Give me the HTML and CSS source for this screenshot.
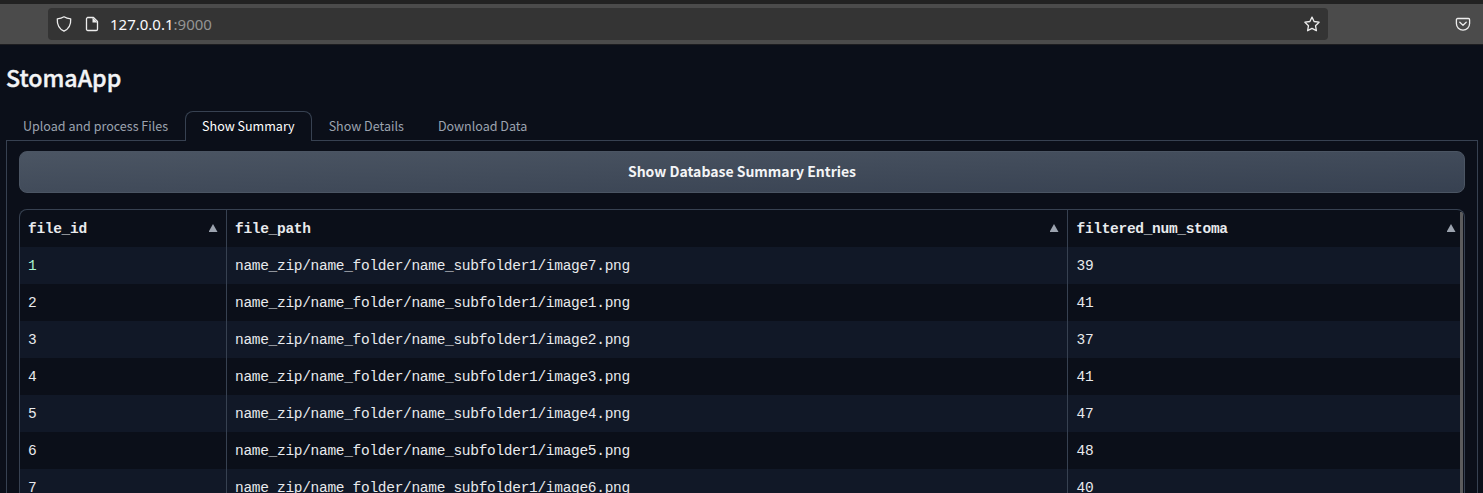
FILE: index.html
```html
<!DOCTYPE html>
<html lang="en">
<head>
<meta charset="utf-8">
<title>StomaApp</title>
<link rel="stylesheet" href="styles.css">
</head>
<body>
<header class="toolbar">
  <div class="address">
    <svg class="icon" viewBox="0 0 16 16"><path d="M8 .8C6 2 3.700 2.600 1.300 2.900c-.3 5 1.200 9.700 6.700 12.300 5.500-2.600 7-7.300 6.700-12.300C12.300 2.600 10 2 8 .8z"/></svg>
    <svg class="icon page" viewBox="0 0 16 16"><path d="M3.500 1.500H9.500L13.500 5.500V13.200a1.300 1.300 0 0 1-1.300 1.300H3.800A1.300 1.300 0 0 1 2.500 13.200V2.800A1.300 1.300 0 0 1 3.800 1.500z"/><path class="solid" d="M8.500 1.500V6.500H13.500z"/></svg>
    <span class="url">127.0.0.1<span class="port">:9000</span></span>
    <svg class="icon star" viewBox="0 0 16 16"><path d="M8 1.100L10.100 5.500 15.100 6.200 11.500 9.700 12.400 14.700 8 12.400 3.600 14.700 4.500 9.700 .9 6.200 5.900 5.500z"/></svg>
  </div>
  <svg class="icon pocket" viewBox="0 0 16 16"><path d="M2.600 2.500H13.400a1.200 1.200 0 0 1 1.200 1.200V7.500a6.600 6.600 0 0 1-13.200 0V3.700A1.200 1.200 0 0 1 2.600 2.500z"/><path d="M4.800 6.300L8 9.200 11.200 6.300"/></svg>
</header>
<main class="app">
  <h1 class="title">StomaApp</h1>
  <nav class="tabs">
    <button class="tab">Upload and process Files</button>
    <button class="tab selected">Show Summary</button>
    <button class="tab">Show Details</button>
    <button class="tab">Download Data</button>
    <div class="rule"></div>
  </nav>
  <section class="panel">
    <button class="action">Show Database Summary Entries</button>
    <div class="frame">
      <div class="table">
        <div class="row head">
          <div class="cell"><span>file_id</span><i class="sort"></i></div>
          <div class="cell"><span>file_path</span><i class="sort"></i></div>
          <div class="cell"><span>filtered_num_stoma</span><i class="sort"></i></div>
        </div>
        <div class="row"><div class="cell active">1</div><div class="cell">name_zip/name_folder/name_subfolder1/image7.png</div><div class="cell">39</div></div>
        <div class="row"><div class="cell">2</div><div class="cell">name_zip/name_folder/name_subfolder1/image1.png</div><div class="cell">41</div></div>
        <div class="row"><div class="cell">3</div><div class="cell">name_zip/name_folder/name_subfolder1/image2.png</div><div class="cell">37</div></div>
        <div class="row"><div class="cell">4</div><div class="cell">name_zip/name_folder/name_subfolder1/image3.png</div><div class="cell">41</div></div>
        <div class="row"><div class="cell">5</div><div class="cell">name_zip/name_folder/name_subfolder1/image4.png</div><div class="cell">47</div></div>
        <div class="row"><div class="cell">6</div><div class="cell">name_zip/name_folder/name_subfolder1/image5.png</div><div class="cell">48</div></div>
        <div class="row"><div class="cell">7</div><div class="cell">name_zip/name_folder/name_subfolder1/image6.png</div><div class="cell">40</div></div>
      </div>
      <div class="scrollbar"></div>
    </div>
  </section>
</main>
</body>
</html>
```
FILE: styles.css
```css
* { box-sizing: border-box; }
html, body { height: 100%; }
body { margin: 0; overflow: hidden; display: flex; flex-direction: column; background: #0b0f19; color: #f3f4f6; font-family: "Noto Sans CJK SC", "Noto Sans", sans-serif; }
button { font: inherit; margin: 0; color: inherit; }

.toolbar { flex: none; height: 45px; display: flex; align-items: center; justify-content: space-between; padding: 0 12px 0 48px; background: #4b4b4b; border-top: 4px solid #222; border-bottom: 1px solid #1d1d20; }
.address { width: 1280px; height: 32px; display: flex; align-items: center; padding: 0 8px; background: #343434; border-radius: 4px; }
.icon { width: 16px; height: 16px; flex: none; fill: none; stroke: #ededed; stroke-width: 1.300; stroke-linejoin: round; stroke-linecap: round; }
.icon .solid { fill: #ededed; stroke: none; }
.page { margin-left: 12px; }
.star { margin-left: auto; }
.url { margin-left: 10px; font: 15px/20px "Noto Sans", sans-serif; color: #fbfbfe; }
.port { color: #949494; }

.app { flex: 1; min-height: 0; display: flex; flex-direction: column; padding: 0 5px 0 6px; }
.title { width: max-content; margin: 15px 0 0; height: 36px; font-size: 23.200px; line-height: 35px; font-weight: 500; -webkit-text-stroke: .4px #f3f4f6; }
.tabs { flex: none; display: flex; height: 30px; margin-top: 15px; }
.tab { height: 30px; padding: 1px 17px 0; border: 0; border-bottom: 1px solid #374151; background: none; color: #9ca3af; font-size: 12.540px; line-height: 28px; white-space: nowrap; }
.selected { padding: 0 16px 1px; border: 1px solid #374151; border-bottom: 0; border-radius: 8px 8px 0 0; color: #fff; }
.rule { flex: 1; border-bottom: 1px solid #374151; }

.panel { flex: 1; min-height: 0; display: flex; flex-direction: column; gap: 16px; padding: 10px 12px 0; border: solid #374151; border-width: 0 1px; }
.action { flex: none; height: 42px; border: 1px solid #4b5563; border-radius: 8px; background: linear-gradient(to bottom right, #4b5563, #374151); font-size: 14px; line-height: 38px; font-weight: 700; padding: 0 0 2px; }
.frame { flex: 1; min-height: 0; display: flex; overflow: hidden; border: 1px solid #374151; border-bottom: 0; border-radius: 8px 8px 0 0; }
.table { flex: 1; }
.row { display: grid; grid-template-columns: 207px 841px 1fr; height: 37px; }
.row:nth-child(even) { background: #111827; }
.cell { display: flex; align-items: center; justify-content: space-between; padding: 1px 9px 0 8px; border-right: 1px solid #374151; font: 14.500px/22px "Liberation Mono", monospace; letter-spacing: -.3px; color: #e8eaed; }
.cell:last-child { border-right: 0; padding-left: 8.500px; padding-right: 5px; }
.head .cell { font-weight: 700; }
.cell.active { color: #a7f3d0; }
.sort { width: 9px; height: 8px; margin: -2px -.5px 0 0; background: #9ca3af; clip-path: polygon(50% 0, 100% 100%, 0 100%); }
.scrollbar { width: 3px; margin: 2px 1px 0 0; background: #5c5c5d; }
```
